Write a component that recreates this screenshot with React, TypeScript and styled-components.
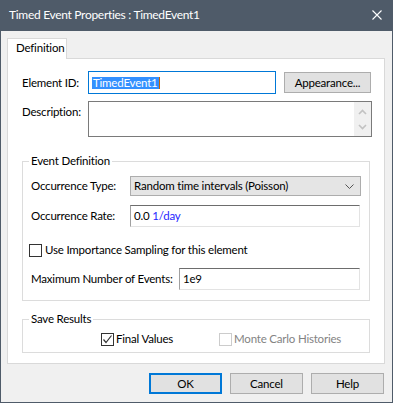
import React from 'react';
import styled, { createGlobalStyle } from 'styled-components';

const GlobalStyle = createGlobalStyle`
	html, body {
		margin: 0;
		padding: 0;
		background: #ffffff;
	}
	body {
		font-family: Lato, 'Liberation Sans', sans-serif;
		font-size: 11.5px;
		letter-spacing: -0.2px;
		line-height: 16px;
		color: #000000;
	}
`;

const App: React.FC = () => {
	return (
		<>
			<GlobalStyle />
			<Window>
				<TitleBar>
					<Title>Timed Event Properties : TimedEvent1</Title>
					<CloseButton>
						<svg width="10" height="10" viewBox="0 0 10 10">
							<path d="M0.5 0.5 L9.5 9.5 M9.5 0.5 L0.5 9.5" stroke="#ffffff" strokeWidth="1.1" />
						</svg>
					</CloseButton>
				</TitleBar>
				<Body>
					<TabStrip>
						<Tab>Definition</Tab>
					</TabStrip>
					<Panel>
						<Row>
							<Label width={66}>Element ID:</Label>
							<TextInput width={188} height={23} focused>
								<Selected>TimedEvent1</Selected>
								<Caret />
							</TextInput>
							<Button width={87} style={{ marginLeft: 8 }}>Appearance...</Button>
						</Row>
						<DescRow>
							<Label width={66} top>Description:</Label>
							<TextArea>
								<TextAreaField />
								<ScrollColumn>
									<svg width="9" height="6" viewBox="0 0 9 6">
										<path d="M1 5 L4.5 1.5 L8 5" stroke="#c2c2c2" strokeWidth="1.6" fill="none" />
									</svg>
									<svg width="9" height="6" viewBox="0 0 9 6">
										<path d="M1 1 L4.5 4.5 L8 1" stroke="#c2c2c2" strokeWidth="1.6" fill="none" />
									</svg>
								</ScrollColumn>
							</TextArea>
						</DescRow>
						<Group padTop={7} padBottom={10} spacing={16}>
							<Legend>Event Definition</Legend>
							<Row>
								<Label width={99}>Occurrence Type:</Label>
								<Select>
									<span>Random time intervals (Poisson)</span>
									<svg width="9" height="5" viewBox="0 0 9 5">
										<path d="M0.5 0.5 L4.5 4.5 L8.5 0.5" stroke="#555" strokeWidth="1" fill="none" />
									</svg>
								</Select>
							</Row>
							<Row gap={9}>
								<Label width={99}>Occurrence Rate:</Label>
								<TextInput width={230} height={22}>
									0.0 <Unit>1/day</Unit>
								</TextInput>
							</Row>
							<CheckRow gap={15}>
								<Check />
								<span>Use Importance Sampling for this element</span>
							</CheckRow>
							<Row gap={10}>
								<Label width={148}>Maximum Number of Events:</Label>
								<TextInput width={181} height={22}>1e9</TextInput>
							</Row>
						</Group>
						<Group padTop={4} padBottom={5} spacing={10}>
							<Legend>Save Results</Legend>
							<CheckRow gap={0}>
								<CheckOption offset={72}>
									<Check checked />
									<span>Final Values</span>
								</CheckOption>
								<CheckOption offset={45} disabled>
									<Check disabled />
									<span>Monte Carlo Histories</span>
								</CheckOption>
							</CheckRow>
						</Group>
					</Panel>
					<ButtonBar>
						<Button width={73} primary>OK</Button>
						<Button width={73}>Cancel</Button>
						<Button width={73}>Help</Button>
					</ButtonBar>
				</Body>
			</Window>
		</>
	);
};

const Check: React.FC<{ checked?: boolean; disabled?: boolean }> = ({ checked, disabled }) => (
	<CheckBox disabled={disabled}>
		{checked && (
			<svg width="11" height="11" viewBox="0 0 11 11">
				<path d="M1.5 5.5 L4 8.5 L9.5 1.5" stroke="#333" strokeWidth="1.2" fill="none" />
			</svg>
		)}
	</CheckBox>
);

const Window = styled.div`
	width: 393px;
	height: 403px;
	box-sizing: border-box;
	border: 1px solid #4f5b69;
	border-top: none;
	background: #f0f0f0;
	display: flex;
	flex-direction: column;
`;

const TitleBar = styled.div`
	height: 31px;
	flex-shrink: 0;
	background: #4f5b69;
	display: flex;
	align-items: center;
	justify-content: space-between;
	padding: 0 10px 0 8px;
	color: #ffffff;
`;

const Title = styled.div`
	font-size: 12px;
	letter-spacing: -0.3px;
	margin-top: -1px;
`;

const CloseButton = styled.div`
	display: flex;
	margin-top: -1px;
`;

const Body = styled.div`
	padding: 7px 7px 0 6px;
	display: flex;
	flex-direction: column;
`;

const TabStrip = styled.div`
	display: flex;
	height: 20px;
`;

const Tab = styled.div`
	width: 60px;
	height: 21px;
	box-sizing: border-box;
	background: #ffffff;
	border: 1px solid #d9d9d9;
	border-bottom: none;
	padding: 1px 0 0 8px;
	position: relative;
	z-index: 1;
`;

const Panel = styled.div`
	height: 306px;
	box-sizing: border-box;
	background: #ffffff;
	border: 1px solid #d9d9d9;
	padding: 12px 12px 0 14px;
	display: flex;
	flex-direction: column;
`;

const Row = styled.div<{ gap?: number }>`
	display: flex;
	align-items: center;
	margin-top: ${(p) => p.gap ?? 0}px;
`;

const DescRow = styled.div`
	display: flex;
	align-items: flex-start;
	margin-top: 7px;
`;

const Label = styled.div<{ width: number; top?: boolean }>`
	width: ${(p) => p.width}px;
	flex-shrink: 0;
	white-space: nowrap;
	padding-top: ${(p) => (p.top ? 3 : 0)}px;
`;

const TextInput = styled.div<{ width: number; height: number; focused?: boolean }>`
	width: ${(p) => p.width}px;
	height: ${(p) => p.height}px;
	box-sizing: border-box;
	display: flex;
	align-items: center;
	padding-left: 3px;
	background: #ffffff;
	white-space: pre;
	border: 1px solid #e3e3e3;
	border-top-color: #6d6d6d;
	border-left-color: #a0a0a0;
	${(p) => p.focused && 'border: 1px solid #0078d7;'}
`;

const Selected = styled.span`
	background: #3390ff;
	color: #ffffff;
	line-height: 12px;
	padding: 0 1px;
`;

const Caret = styled.span`
	width: 1px;
	height: 12px;
	background: #c86400;
`;

const Unit = styled.span`
	color: #1f1fff;
`;

const TextArea = styled.div`
	width: 284px;
	height: 36px;
	box-sizing: border-box;
	border: 1px solid #7a7a7a;
	background: #ffffff;
	display: flex;
`;

const TextAreaField = styled.div`
	flex: 1;
`;

const ScrollColumn = styled.div`
	width: 17px;
	background: #f0f0f0;
	display: flex;
	flex-direction: column;
	align-items: center;
	justify-content: space-around;
	padding: 2px 0;
`;

const Group = styled.fieldset<{ padTop: number; padBottom: number; spacing: number }>`
	margin: ${(p) => p.spacing}px 0 0 0;
	width: 348px;
	box-sizing: border-box;
	border: 1px solid #dcdcdc;
	padding: ${(p) => p.padTop}px 8px ${(p) => p.padBottom}px 8px;
	min-width: 0;
`;

const Legend = styled.legend`
	padding: 0 2px;
	margin-left: -2px;
	line-height: 16px;
`;

const Select = styled.div`
	width: 231px;
	height: 20px;
	box-sizing: border-box;
	background: #e5e5e5;
	border: 1px solid #adadad;
	display: flex;
	align-items: center;
	justify-content: space-between;
	padding: 0 6px 0 3px;
`;

const CheckRow = styled.div<{ gap: number }>`
	display: flex;
	align-items: center;
	margin-top: ${(p) => p.gap}px;
	gap: 3px;
	white-space: nowrap;
`;

const CheckOption = styled.div<{ offset: number; disabled?: boolean }>`
	display: flex;
	align-items: center;
	gap: 2px;
	margin-left: ${(p) => p.offset}px;
	color: ${(p) => (p.disabled ? '#838383' : '#000000')};
`;

const CheckBox = styled.div<{ disabled?: boolean }>`
	width: 13px;
	height: 13px;
	box-sizing: border-box;
	border: 1px solid ${(p) => (p.disabled ? '#cccccc' : '#333333')};
	background: #ffffff;
	display: flex;
	align-items: center;
	justify-content: center;
	margin-left: -2px;
`;

const ButtonBar = styled.div`
	display: flex;
	justify-content: flex-end;
	gap: 8px;
	margin-top: 9px;
	padding-right: 1px;
`;

const Button = styled.div<{ width: number; primary?: boolean }>`
	width: ${(p) => p.width}px;
	height: 21px;
	box-sizing: border-box;
	background: #e1e1e1;
	border: ${(p) => (p.primary ? '2px solid #0078d7' : '1px solid #adadad')};
	display: flex;
	align-items: center;
	justify-content: center;
	flex-shrink: 0;
`;

export default App;
